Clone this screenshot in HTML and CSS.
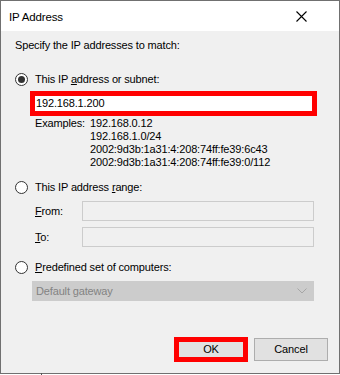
FILE: index.html
```html
<!DOCTYPE html>
<html>
<head>
<meta charset="utf-8">
<link rel="stylesheet" href="styles.css">
</head>
<body>
<div class="window">
  <div class="titlebar">
    <span class="title">IP Address</span>
    <svg class="close" width="11" height="11" viewBox="0 0 11 11"><path d="M0.5 0.5 L10.5 10.5 M10.5 0.5 L0.5 10.5" stroke="#000" stroke-width="1.1" fill="none"/></svg>
  </div>
  <div class="content">
    <div class="intro">Specify the IP addresses to match:</div>

    <div class="radio-row first">
      <span class="radio checked"></span>
      <span class="label">This IP <u>a</u>ddress or subnet:</span>
    </div>
    <div class="ipbox">192.168.1.200</div>
    <div class="examples">
      <span class="ex-label">Examples:</span>
      <div class="ex-values">
        <div>192.168.0.12</div>
        <div>192.168.1.0/24</div>
        <div>2002:9d3b:1a31:4:208:74ff:fe39:6c43</div>
        <div>2002:9d3b:1a31:4:208:74ff:fe39:0/112</div>
      </div>
    </div>

    <div class="radio-row second">
      <span class="radio"></span>
      <span class="label">This IP address <u>r</u>ange:</span>
    </div>
    <div class="field-row from">
      <span class="field-label"><u>F</u>rom:</span>
      <span class="field"></span>
    </div>
    <div class="field-row to">
      <span class="field-label"><u>T</u>o:</span>
      <span class="field"></span>
    </div>

    <div class="radio-row third">
      <span class="radio"></span>
      <span class="label"><u>P</u>redefined set of computers:</span>
    </div>
    <div class="combo">
      <span class="combo-text">Default gateway</span>
      <svg class="chev" width="10" height="6" viewBox="0 0 10 6"><path d="M0.5 0.5 L5 5 L9.5 0.5" stroke="#a6a6a6" stroke-width="1" fill="none"/></svg>
    </div>

    <div class="buttons">
      <div class="btn ok">OK</div>
      <div class="btn cancel">Cancel</div>
    </div>
  </div>
</div>
<div class="tick"></div>
</body>
</html>
```
FILE: styles.css
```css
html, body {
  margin: 0;
  padding: 0;
  background: #ffffff;
}
body {
  width: 340px;
  height: 375px;
  position: relative;
  overflow: hidden;
  font-family: "Liberation Sans", Arial, sans-serif;
  font-size: 11px;
  letter-spacing: -0.15px;
  color: #000;
}
.window {
  width: 340px;
  height: 374px;
  box-sizing: border-box;
  border: 1px solid #707070;
  display: flex;
  flex-direction: column;
}
.titlebar {
  height: 30px;
  box-sizing: border-box;
  padding: 2px 0 0 8px;
  line-height: 28px;
  background: #ffffff;
  display: flex;
  align-items: flex-start;
  justify-content: space-between;
  font-size: 11.5px;
}
.close {
  margin: 8px 32px 0 0;
}
.content {
  flex: 1;
  background: #f0f0f0;
  padding-left: 14px;
  display: flex;
  flex-direction: column;
}
.intro {
  margin-top: 7px;
  line-height: 15px;
  height: 15px;
}
.radio-row {
  display: flex;
  align-items: center;
  height: 15px;
  line-height: 15px;
}
.radio-row.first { margin-top: 19px; }
.radio-row.second { margin-top: 11px; }
.radio-row.third { margin-top: 13px; }
.radio {
  width: 13px;
  height: 13px;
  box-sizing: border-box;
  border: 1px solid #333333;
  border-radius: 50%;
  background: #ffffff;
  margin-right: 7px;
  display: flex;
  align-items: center;
  justify-content: center;
}
.radio.checked::after {
  content: "";
  width: 7px;
  height: 7px;
  border-radius: 50%;
  background: #333333;
}
.ipbox {
  margin: 4px 0 0 15px;
  width: 287px;
  height: 25px;
  box-sizing: border-box;
  border: 5px solid #ff0000;
  background: #ffffff;
  padding-left: 1px;
  line-height: 15px;
}
.examples {
  margin: 1px 0 0 20px;
  display: flex;
  line-height: 13px;
}
.ex-label {
  width: 55px;
}
.field-row {
  display: flex;
  align-items: center;
  margin-left: 20px;
  height: 20px;
}
.field-row.from { margin-top: 6px; }
.field-row.to { margin-top: 6px; }
.field-label {
  width: 47px;
  line-height: 20px;
}
.field {
  width: 232px;
  height: 20px;
  box-sizing: border-box;
  border: 1px solid #cccccc;
  background: #f0f0f0;
}
.combo {
  margin: 6px 0 0 17px;
  width: 282px;
  height: 20px;
  box-sizing: border-box;
  border: 1px solid #cccccc;
  background: #cccccc;
  display: flex;
  align-items: center;
  justify-content: space-between;
  padding: 0 6px 0 3px;
  color: #838383;
}
.buttons {
  display: flex;
  justify-content: flex-end;
  gap: 6px;
  margin: 37px 11px 0 0;
}
.btn {
  height: 23px;
  box-sizing: border-box;
  background: #e1e1e1;
  border: 1px solid #adadad;
  display: flex;
  align-items: center;
  justify-content: center;
  line-height: 15px;
}
.btn.ok {
  width: 74px;
  height: 25px;
  margin-top: -1px;
  border: 5px solid #ff0000;
}
.btn.cancel {
  width: 74px;
}
.tick {
  position: absolute;
  left: 41px;
  top: 373px;
  width: 1px;
  height: 2px;
  background: #555555;
}
```
